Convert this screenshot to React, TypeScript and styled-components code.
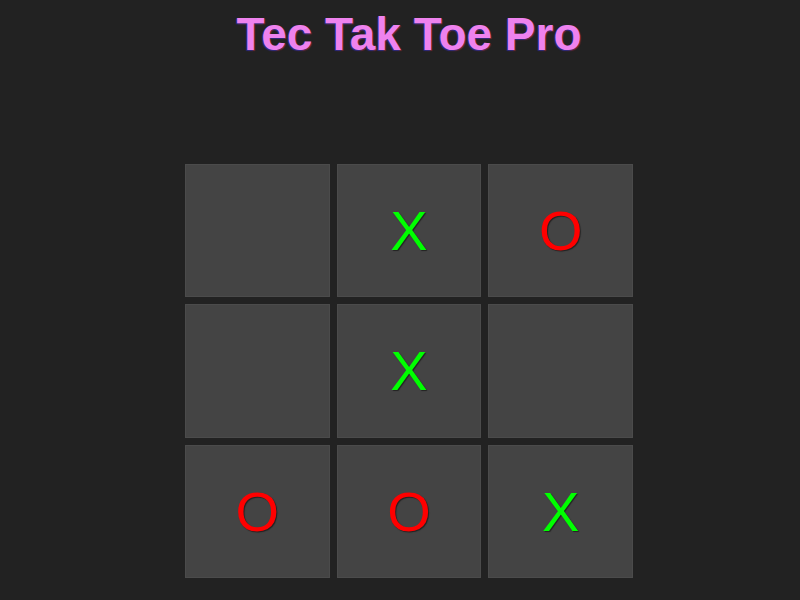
import React from "react";
import styled, { createGlobalStyle } from "styled-components";

const GlobalStyle = createGlobalStyle`
  html, body {
    margin: 0;
    padding: 0;
    background-color: #222222;
  }
  body {
    font-family: "Liberation Sans", Arial, sans-serif;
  }
`;

const Page = styled.div`
  box-sizing: border-box;
  width: 800px;
  height: 600px;
  padding-left: 18px;
  display: flex;
  flex-direction: column;
  align-items: center;
`;

const Title = styled.h1`
  margin: 8px 0 0;
  font-size: 46px;
  line-height: 52px;
  font-weight: 700;
  color: violet;
  text-shadow: -1px 1px 1px #2a2a80, 1px 1px 1px #802a2a;
`;

const Board = styled.div`
  margin-top: 104px;
  width: 448px;
  height: 414px;
  display: grid;
  grid-template-columns: repeat(3, 1fr);
  grid-template-rows: repeat(3, 1fr);
  gap: 7px;
`;

type Mark = "X" | "O" | "";

const Cell = styled.div<{ $mark: Mark }>`
  box-sizing: border-box;
  background-color: #444444;
  border: 1px solid #4b4b4b;
  display: flex;
  align-items: center;
  justify-content: center;
  font-size: 56px;
  color: ${(p) => (p.$mark === "X" ? "#00ff00" : "#ff0000")};
  text-shadow: 1px 1px 1px rgba(0, 0, 0, 0.5);
`;

const board: Mark[] = ["", "X", "O", "", "X", "", "O", "O", "X"];

export default function App() {
  return (
    <Page>
      <GlobalStyle />
      <Title>Tec Tak Toe Pro</Title>
      <Board>
        {board.map((m, i) => (
          <Cell key={i} $mark={m}>
            {m}
          </Cell>
        ))}
      </Board>
    </Page>
  );
}
